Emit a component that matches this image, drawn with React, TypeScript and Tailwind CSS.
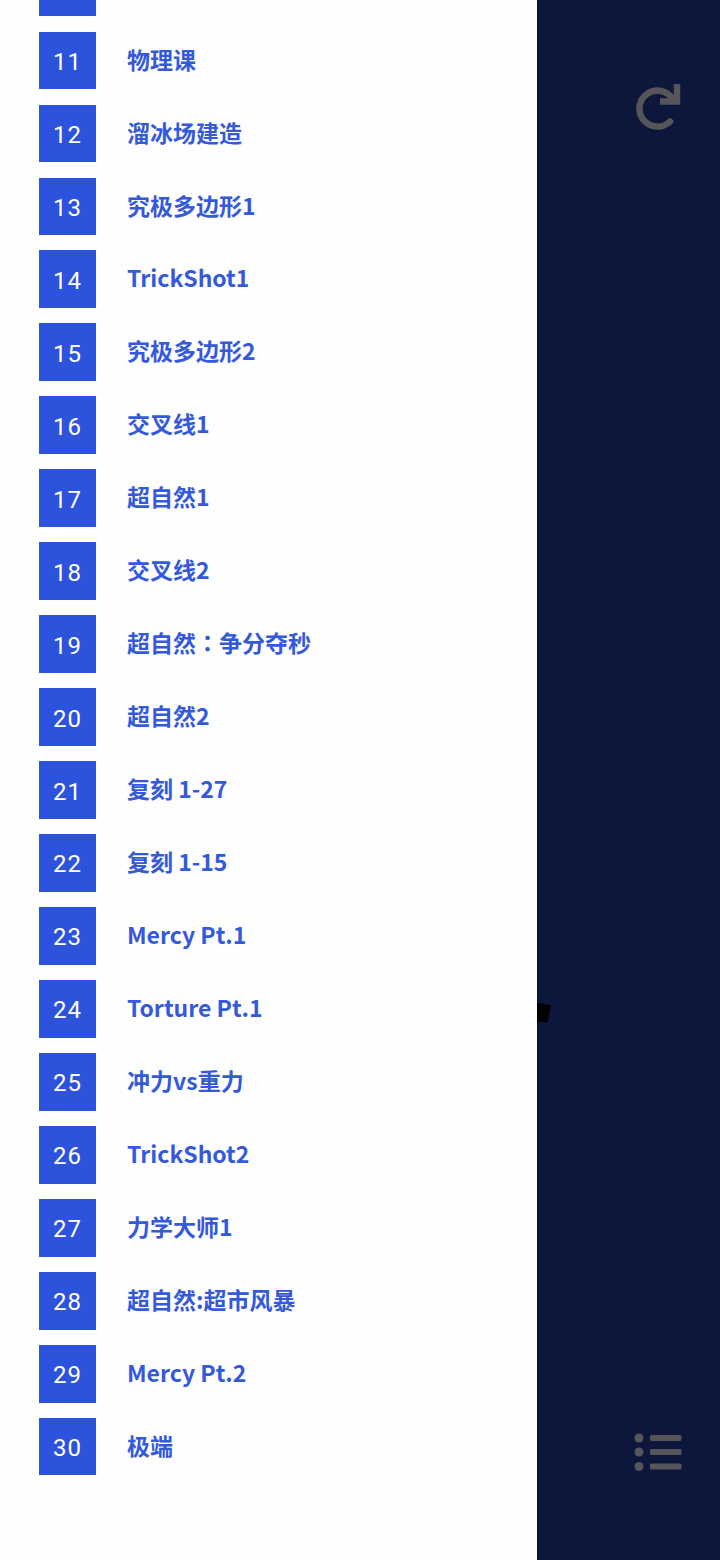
const levels = [
  { id: 10, name: '' },
  { id: 11, name: '物理课' },
  { id: 12, name: '溜冰场建造' },
  { id: 13, name: '究极多边形1' },
  { id: 14, name: 'TrickShot1' },
  { id: 15, name: '究极多边形2' },
  { id: 16, name: '交叉线1' },
  { id: 17, name: '超自然1' },
  { id: 18, name: '交叉线2' },
  { id: 19, name: '超自然：争分夺秒' },
  { id: 20, name: '超自然2' },
  { id: 21, name: '复刻 1-27' },
  { id: 22, name: '复刻 1-15' },
  { id: 23, name: 'Mercy Pt.1' },
  { id: 24, name: 'Torture Pt.1' },
  { id: 25, name: '冲力vs重力' },
  { id: 26, name: 'TrickShot2' },
  { id: 27, name: '力学大师1' },
  { id: 28, name: '超自然:超市风暴' },
  { id: 29, name: 'Mercy Pt.2' },
  { id: 30, name: '极端' },
]

function RefreshIcon() {
  return (
    <svg width="48" height="48" viewBox="0 0 48 48" fill="none" stroke="#55555a" strokeWidth="6.5">
      <path d="M36 37.5A18 18 0 1 1 39 15.5" strokeLinecap="round" />
      <path d="M26 17.5H43V0" />
    </svg>
  )
}

function ListIcon() {
  return (
    <svg width="48" height="38" viewBox="0 0 48 38" fill="#55555a">
      <circle cx="5" cy="5" r="4.5" />
      <circle cx="5" cy="19" r="4.5" />
      <circle cx="5" cy="33.5" r="4.5" />
      <rect x="16" y="2" width="31.5" height="6" rx="1.5" />
      <rect x="16" y="16" width="31.5" height="6" rx="1.5" />
      <rect x="16" y="30.5" width="31.5" height="6" rx="1.5" />
    </svg>
  )
}

export default function App() {
  return (
    <div className="flex h-[1560px] w-[720px] overflow-hidden bg-[#0d173b] font-['Noto_Sans_CJK_SC','Noto_Sans',sans-serif]">
      <div className="w-[537px] shrink-0 bg-[#fefefe]">
        <div className="-mt-[41.42px] flex flex-col gap-[15.47px] pl-[39px]">
          {levels.map((level) => (
            <div key={level.id} className="flex h-[57.5px] items-center gap-[31px]">
              {/* the first row is scrolled off, only the bottom of its box shows */}
              <div className="flex h-[57.5px] w-[57px] items-center justify-center bg-[#2d52dc] pt-[3px] font-['Roboto',sans-serif] text-[24px] tracking-[1px] text-white">
                {level.id > 10 ? level.id : null}
              </div>
              <span className="pb-[3px] text-[23px] font-semibold text-[#3459db]">
                {level.name.includes('：') ? (
                  <>
                    {level.name.split('：')[0]}
                    <span className="font-['Noto_Sans_CJK_TC',sans-serif]">：</span>
                    {level.name.split('：')[1]}
                  </>
                ) : (
                  level.name
                )}
              </span>
            </div>
          ))}
        </div>
      </div>
      <div className="relative flex flex-1 flex-col justify-between pb-[89px] pl-[97px] pt-[84px]">
        <RefreshIcon />
        <ListIcon />
        <div className="absolute left-0 top-[1003px] h-[19px] w-[14px] bg-black [clip-path:polygon(0_0,100%_10%,75%_100%,0_100%)]" />
      </div>
    </div>
  )
}
